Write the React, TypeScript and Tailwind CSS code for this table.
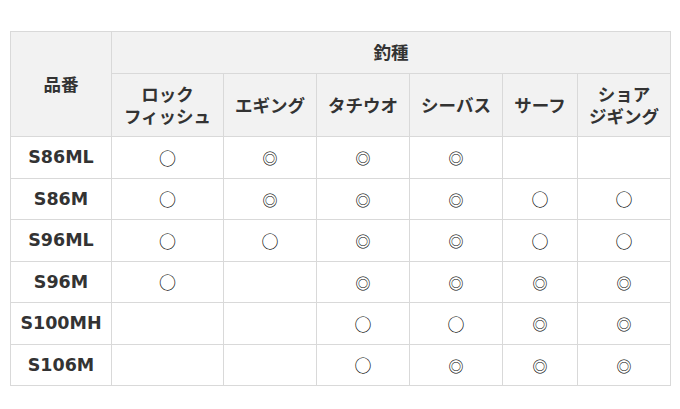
import React from "react";

const species: string[][] = [
  ["ロック", "フィッシュ"],
  ["エギング"],
  ["タチウオ"],
  ["シーバス"],
  ["サーフ"],
  ["ショア", "ジギング"],
];

const rows: { name: string; marks: string[] }[] = [
  { name: "S86ML", marks: ["○", "◎", "◎", "◎", "", ""] },
  { name: "S86M", marks: ["○", "◎", "◎", "◎", "○", "○"] },
  { name: "S96ML", marks: ["○", "○", "◎", "◎", "○", "○"] },
  { name: "S96M", marks: ["○", "", "◎", "◎", "◎", "◎"] },
  { name: "S100MH", marks: ["", "", "○", "○", "◎", "◎"] },
  { name: "S106M", marks: ["", "", "○", "◎", "◎", "◎"] },
];

const heights = ["h-[42px]", "h-[41px]", "h-[42px]", "h-[41px]", "h-[42px]", "h-[41px]"];

export default function App() {
  return (
    <div className="w-[680px] h-[409px] bg-white pt-[31px] pl-[10px]">
      <table
        className="table-fixed border-collapse w-[661px] text-[#333]"
        style={{ fontFamily: '"DejaVu Sans", "Noto Sans CJK JP", sans-serif' }}
      >
        <colgroup>
          <col className="w-[101px]" />
          <col className="w-[112px]" />
          <col className="w-[93px]" />
          <col className="w-[93px]" />
          <col className="w-[93px]" />
          <col className="w-[75px]" />
          <col className="w-[93px]" />
        </colgroup>
        <thead>
          <tr className="h-[42px]">
            <th
              rowSpan={2}
              className="border border-[#d9d9d9] bg-[#f2f2f2] text-[17.5px] font-bold p-0 align-middle [font-family:'Noto_Sans_CJK_JP',sans-serif]"
            >
              品番
            </th>
            <th
              colSpan={6}
              className="border border-[#d9d9d9] bg-[#f2f2f2] text-[17.5px] font-bold p-0 align-middle [font-family:'Noto_Sans_CJK_JP',sans-serif]"
            >
              釣種
            </th>
          </tr>
          <tr className="h-[63px]">
            {species.map((s, i) => (
              <th
                key={i}
                className="border border-[#d9d9d9] bg-[#f2f2f2] text-[17.5px] font-bold p-0 leading-[22px] align-middle [font-family:'Noto_Sans_CJK_JP',sans-serif]"
              >
                {s.map((line, j) => (
                  <div key={j} className="leading-[22px]">{line}</div>
                ))}
              </th>
            ))}
          </tr>
        </thead>
        <tbody>
          {rows.map((r, i) => (
            <tr key={r.name} className={heights[i]}>
              <td className="border border-[#d9d9d9] bg-white text-[17.5px] font-bold text-center p-0 align-middle">
                {r.name}
              </td>
              {r.marks.map((m, j) => (
                <td
                  key={j}
                  className="border border-[#d9d9d9] bg-white text-center p-0 align-middle text-black [font-family:'Noto_Sans_CJK_JP',sans-serif] font-normal"
                >
                  <span className={m === "◎" ? "text-[15px]" : "text-[17px]"}>{m}</span>
                </td>
              ))}
            </tr>
          ))}
        </tbody>
      </table>
    </div>
  );
}
